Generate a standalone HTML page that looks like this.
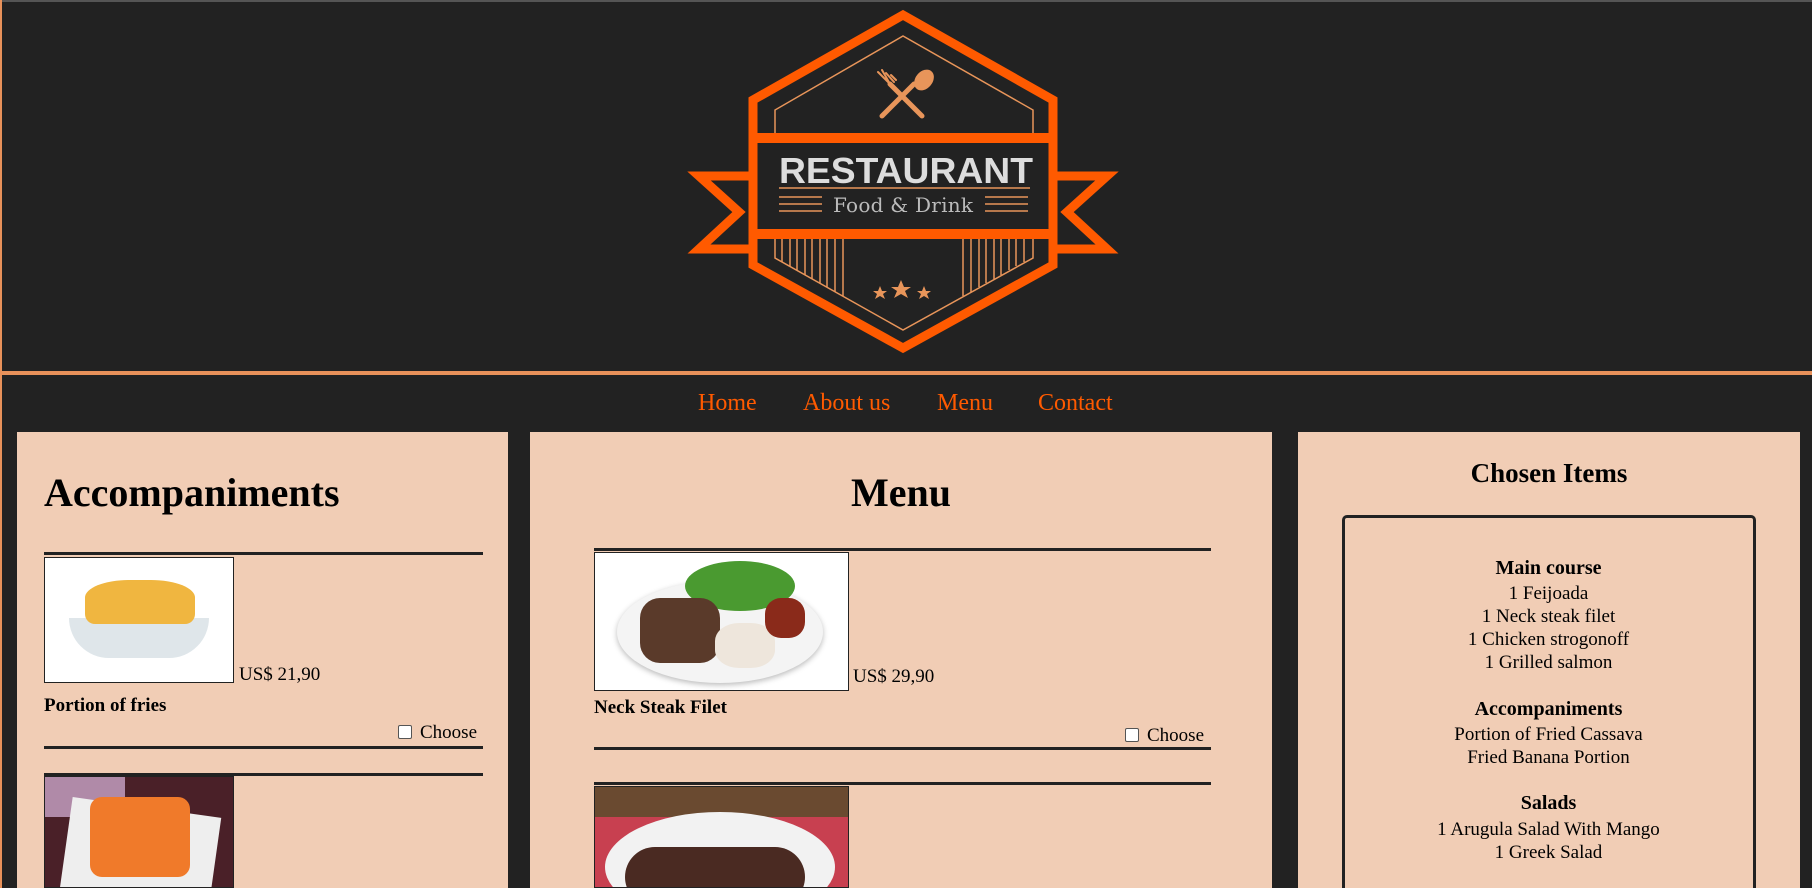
<!DOCTYPE html>
<html style="overflow:hidden;height:888px"><head><meta charset="utf-8"><style>
*{margin:0;padding:0;box-sizing:border-box}
body{width:1812px;height:888px;overflow:hidden;background:#222;font-family:"Liberation Serif",serif;color:#000;position:relative}
.a{position:absolute;white-space:nowrap}
.panel{position:absolute;background:#f1cdb5;top:432px;height:456px}
.hr{position:absolute;height:3px;background:#222}
.nav{color:#ff5a00;font-size:24px;top:390px}
.img{position:absolute;border:1px solid #222;background:#fff;overflow:hidden}
.t{font-size:19px}
.c{position:absolute;left:1342px;width:413px;text-align:center;font-size:19px;line-height:23px}
.cb{display:inline-block;width:14px;height:14px;border:1px solid #555;border-radius:2px;background:#fff;vertical-align:-1px;margin-right:8px}
</style></head><body>
<div class="a" style="left:0;top:0;width:1812px;height:2px;background:#555"></div>
<div class="a" style="left:0;top:0;width:2px;height:888px;background:#e8915a"></div>
<div class="a" style="left:0;top:371px;width:1812px;height:4px;background:#e8915a"></div>

<svg class="a" style="left:680px;top:0" width="450" height="370" viewBox="680 0 450 370">
<g fill="none" stroke="#ff5a00" stroke-width="9" stroke-linejoin="miter" stroke-miterlimit="3">
<polygon points="903,15 753,100 753,265 903,348 1053,265 1053,100"/>
<polyline points="753,176 699,176 739,212 699,249 753,249"/>
<polyline points="1053,176 1107,176 1067,212 1107,249 1053,249"/>
</g>
<rect x="753" y="133" width="300" height="10" fill="#ff5a00"/>
<rect x="753" y="229" width="300" height="10" fill="#ff5a00"/>
<g fill="none" stroke="#e8955a" stroke-width="1.5">
<polyline points="775,133 775,110 903,36 1033,110 1033,133"/>
<polyline points="775,239 775,258 903,330 1033,258 1033,239"/>
<path d="M782,239V262M790,239V266M797,239V270M805,239V275M812,239V279M820,239V283M827,239V287M835,239V292M843,239V296M963,239V296M971,239V292M979,239V287M986,239V283M994,239V279M1001,239V275M1009,239V270M1016,239V266M1024,239V262"/>
</g>
<g stroke="#e8955a" stroke-linecap="round" fill="#e8955a">
<line x1="882" y1="116" x2="914" y2="84" stroke-width="5"/>
<ellipse cx="924" cy="80" rx="8" ry="11" transform="rotate(40 924 80)"/>
<line x1="922" y1="116" x2="890" y2="84" stroke-width="5"/>
<path d="M892,86 L878,72 M890,84 L882,70 M894,82 L886,73 M896,80 L891,75" stroke-width="2"/>
</g>
<text x="906" y="183" text-anchor="middle" font-family="Liberation Sans,sans-serif" font-weight="bold" font-size="36" fill="#ddd" textLength="254" lengthAdjust="spacingAndGlyphs">RESTAURANT</text>
<g stroke="#e8955a" stroke-width="1.5">
<line x1="779" y1="188" x2="1030" y2="188"/>
<path d="M779,197H822M779,204H822M779,211H822M985,197H1028M985,204H1028M985,211H1028"/>
</g>
<text x="903" y="212" text-anchor="middle" font-family="DejaVu Serif,serif" font-size="20" fill="#bbb" textLength="140">Food &amp; Drink</text>
<g fill="#e8955a">
<polygon points="880,286 882,291 887,291 883,294 885,299 880,296 875,299 877,294 873,291 878,291"/>
<polygon points="901,280 904,287 911,287 905,291 908,298 901,294 894,298 897,291 891,287 898,287"/>
<polygon points="924,286 926,291 931,291 927,294 929,299 924,296 919,299 921,294 917,291 922,291"/>
</g>
</svg>

<div class="a nav" style="left:698px">Home</div>
<div class="a nav" style="left:803px">About us</div>
<div class="a nav" style="left:937px">Menu</div>
<div class="a nav" style="left:1038px">Contact</div>

<div class="panel" style="left:17px;width:491px"></div>
<div class="panel" style="left:530px;width:742px"></div>
<div class="panel" style="left:1298px;width:502px"></div>

<div class="a" style="left:44px;top:469px;font-size:40px;font-weight:bold">Accompaniments</div>
<div class="hr" style="left:44px;top:552px;width:439px"></div>
<div class="img" style="left:44px;top:557px;width:190px;height:126px">
<div class="a" style="left:24px;top:60px;width:140px;height:40px;background:#dfe6ea;border-radius:0 0 60px 60px"></div>
<div class="a" style="left:40px;top:22px;width:110px;height:44px;background:#f0b640;border-radius:40% 40% 10px 10px"></div>
</div>
<div class="a t" style="left:239px;top:664px">US$ 21,90</div>
<div class="a t" style="left:44px;top:695px;font-weight:bold">Portion of fries</div>
<div class="a t" style="left:398px;top:722px"><span class="cb"></span>Choose</div>
<div class="hr" style="left:44px;top:746px;width:439px"></div>
<div class="hr" style="left:44px;top:773px;width:439px"></div>
<div class="img" style="left:44px;top:776px;width:190px;height:112px;background:#4a2028">
<div class="a" style="left:0;top:0;width:80px;height:40px;background:#b08aa8"></div>
<div class="a" style="left:20px;top:30px;width:150px;height:100px;background:#eee;transform:rotate(8deg)"></div>
<div class="a" style="left:45px;top:20px;width:100px;height:80px;background:#f07a2a;border-radius:12px"></div>
</div>

<div class="a" style="left:530px;width:742px;top:469px;text-align:center;font-size:40px;font-weight:bold">Menu</div>
<div class="hr" style="left:594px;top:548px;width:617px"></div>
<div class="img" style="left:594px;top:552px;width:255px;height:139px">
<div class="a" style="left:22px;top:28px;width:206px;height:102px;background:#f4f4f4;border-radius:50%;box-shadow:0 2px 6px #bbb"></div>
<div class="a" style="left:90px;top:8px;width:110px;height:50px;background:#4a9a30;border-radius:50%"></div>
<div class="a" style="left:45px;top:45px;width:80px;height:65px;background:#5a3a2a;border-radius:20px"></div>
<div class="a" style="left:120px;top:70px;width:60px;height:45px;background:#eee6dc;border-radius:40%"></div>
<div class="a" style="left:170px;top:45px;width:40px;height:40px;background:#8a2a1a;border-radius:40%"></div>
</div>
<div class="a t" style="left:853px;top:666px">US$ 29,90</div>
<div class="a t" style="left:594px;top:697px;font-weight:bold">Neck Steak Filet</div>
<div class="a t" style="left:1125px;top:725px"><span class="cb"></span>Choose</div>
<div class="hr" style="left:594px;top:747px;width:617px"></div>
<div class="hr" style="left:594px;top:782px;width:617px"></div>
<div class="img" style="left:594px;top:786px;width:255px;height:102px;background:#c84050">
<div class="a" style="left:0;top:0;width:255px;height:30px;background:#6a4a30"></div>
<div class="a" style="left:10px;top:25px;width:230px;height:110px;background:#f2f2f2;border-radius:50%"></div>
<div class="a" style="left:30px;top:60px;width:180px;height:60px;background:#4a2a22;border-radius:30px"></div>
</div>

<div class="a" style="left:1298px;width:502px;top:458px;text-align:center;font-size:27px;font-weight:bold">Chosen Items</div>
<div class="a" style="left:1342px;top:515px;width:414px;height:380px;border:3px solid #222;border-radius:5px"></div>
<div class="c" style="top:557px;font-weight:bold;font-size:20px">Main course</div>
<div class="c" style="top:582px">1 Feijoada<br>1 Neck steak filet<br>1 Chicken strogonoff<br>1 Grilled salmon</div>
<div class="c" style="top:698px;font-weight:bold;font-size:20px">Accompaniments</div>
<div class="c" style="top:723px">Portion of Fried Cassava<br>Fried Banana Portion</div>
<div class="c" style="top:792px;font-weight:bold;font-size:20px">Salads</div>
<div class="c" style="top:818px">1 Arugula Salad With Mango<br>1 Greek Salad</div>
</body></html>
